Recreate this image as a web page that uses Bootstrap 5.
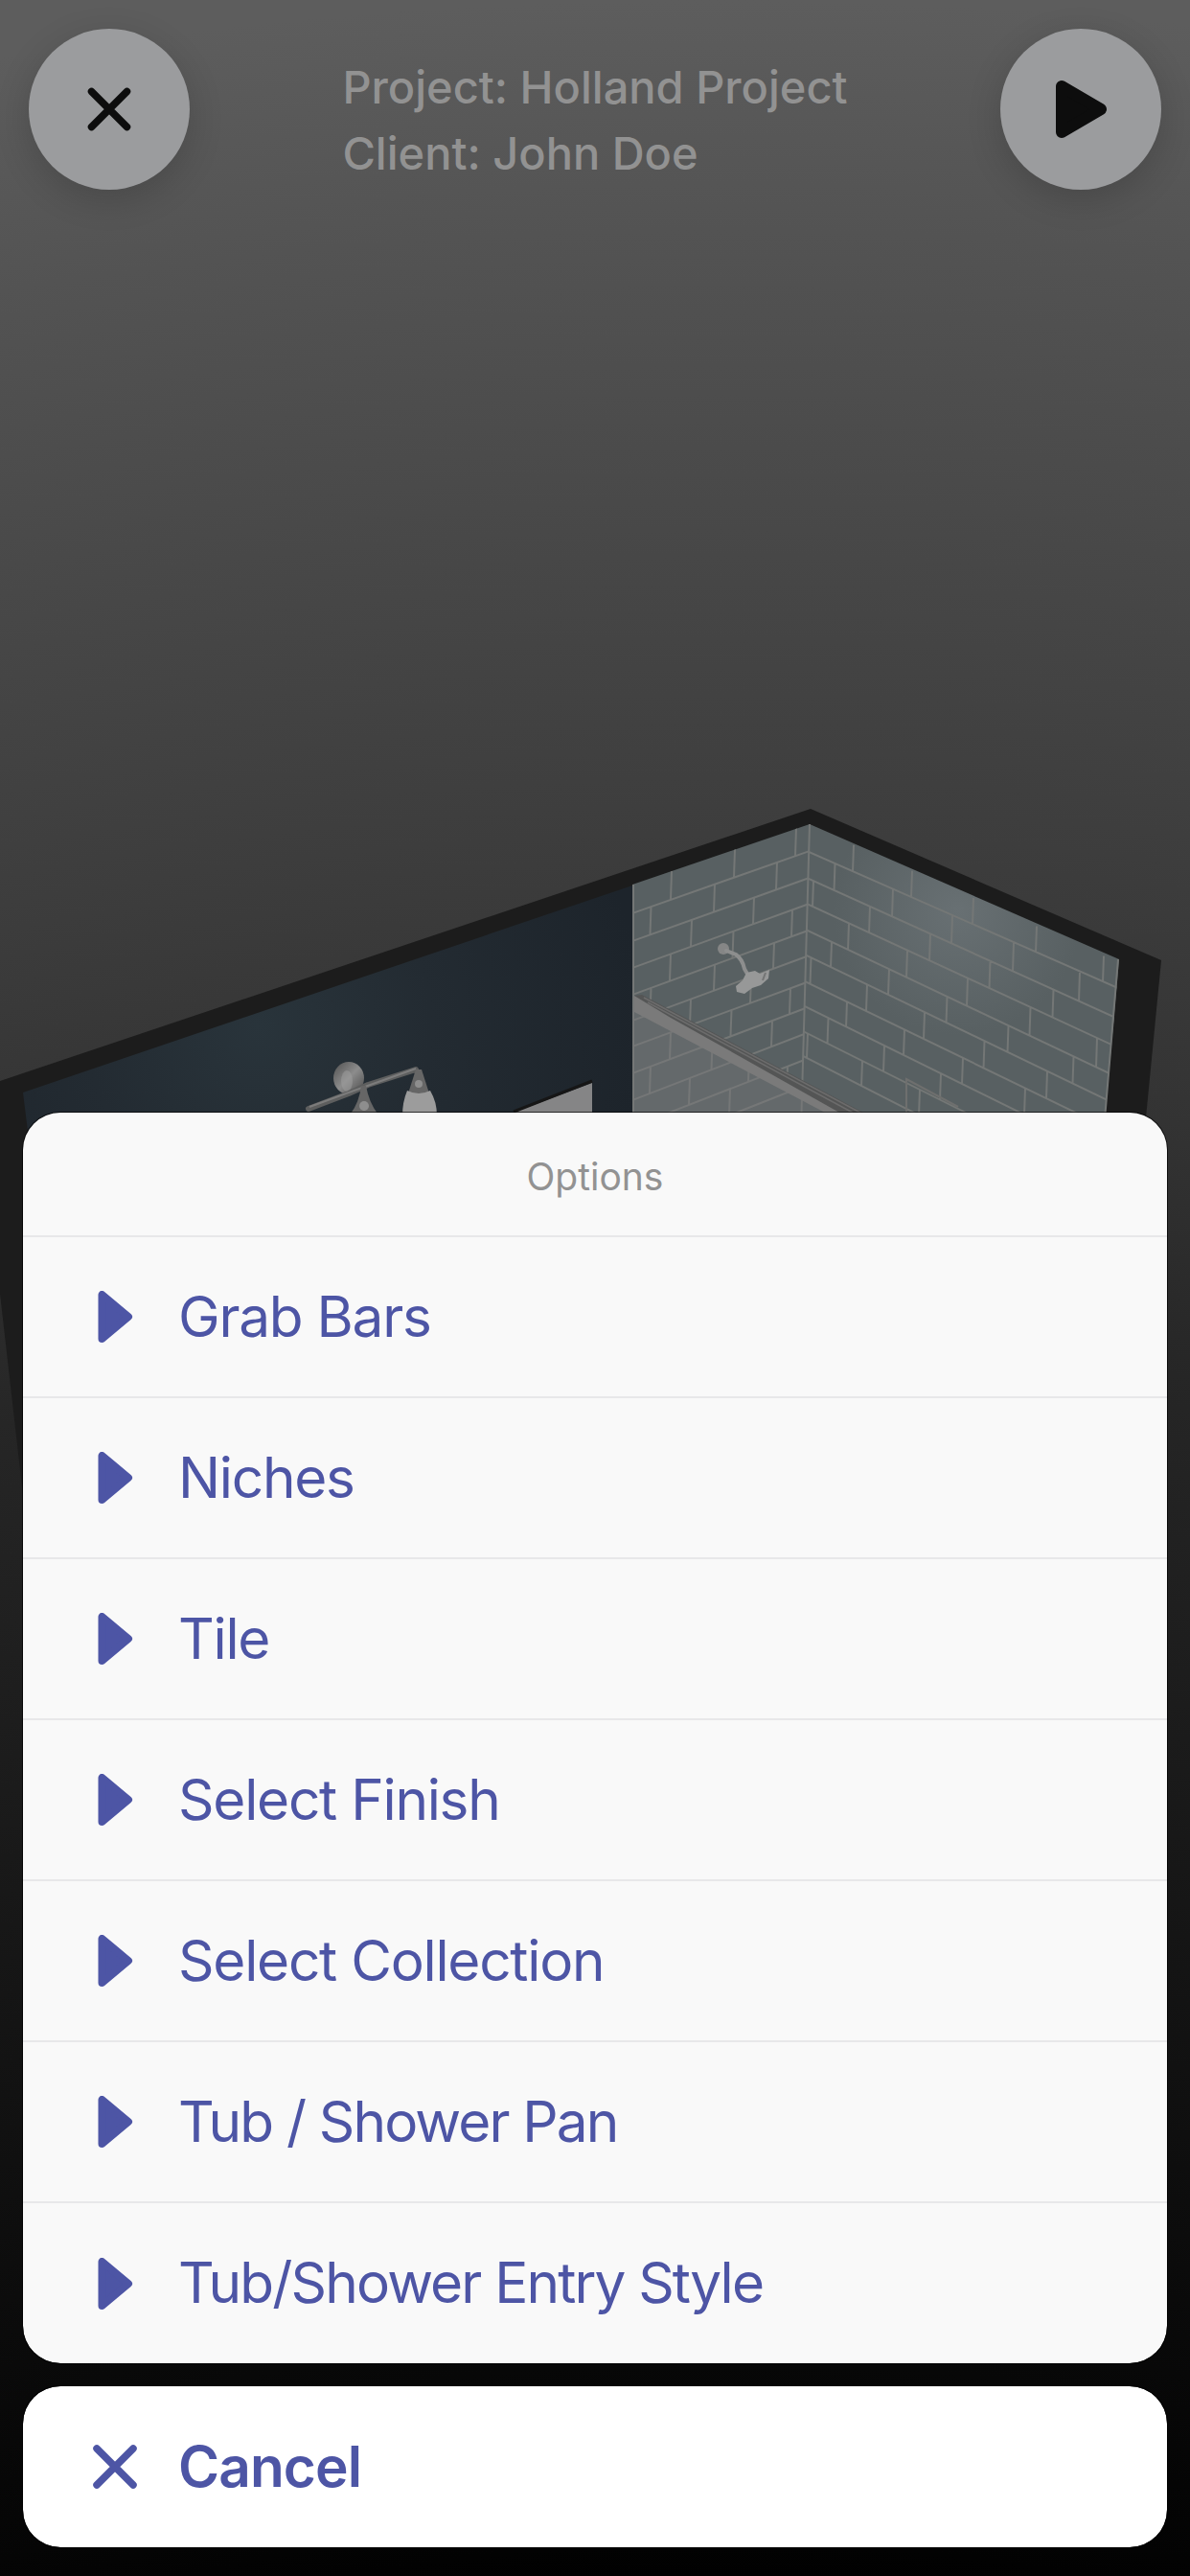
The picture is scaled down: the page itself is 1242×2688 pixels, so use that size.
<!DOCTYPE html>
<html lang="en">
<head>
  <meta charset="UTF-8">
  <title>Holland Project</title>
  <meta name="viewport" content="width=device-width, initial-scale=1">
  <link href="https://cdn.jsdelivr.net/npm/bootstrap@5.3.0/dist/css/bootstrap.min.css" rel="stylesheet">
  <style>
    body {
      font-family: Inter, "Liberation Sans", sans-serif;
      background: #000;
    }
    .viewer {
      width: 1242px;
      height: 2688px;
      padding: 30px 30px 0;
      background: radial-gradient(circle at 750px 4700px, #010101 2010px, #0a0a0a 2350px, #262626 3300px, #333 3560px, #3d3d3d 3830px, #474747 4120px, #535353 4460px, #5d5d5d 4700px);
    }
    .scene { z-index: 0; }
    .viewer-bar, .sheet { z-index: 1; }
    .round-btn {
      width: 168px;
      height: 168px;
      background: #9b9c9e;
      color: #0d0d0d;
      box-shadow: 0 10px 36px rgba(0, 0, 0, .16);
    }
    .project-info {
      margin-top: 26px;
      font-size: 47px;
      line-height: 69px;
      font-weight: 500;
      color: #929292;
    }
    .sheet {
      margin: 0 -6px 30px;
      gap: 24px;
    }
    .sheet .list-group {
      --bs-list-group-border-radius: 39px;
      --bs-list-group-border-width: 0;
      box-shadow: 0 0 0 1px rgba(0, 0, 0, .7);
    }
    .sheet-title {
      height: 128px;
      padding-top: 6px;
      font-size: 39px;
      color: #929292;
      background: #f9f9f9;
    }
    .sheet-item {
      height: 168px;
      padding: 0 0 0 72px;
      gap: 42px;
      font-size: 58.5px;
      line-height: 1;
      letter-spacing: -1.25px;
      color: #4d55a5;
      background: #f9f9f9;
    }
    .sheet-title + .sheet-item, .sheet-item + .sheet-item { border-top: 2px solid #e8e8e9 !important; }
    .sheet-item:nth-child(n+7) { letter-spacing: -1.85px; }
    #options .sheet-item:last-child { height: 169px; }
    .sheet-cancel { background: #fff; font-weight: 600; letter-spacing: -.9px; }
  </style>
</head>
<body>

  <div class="viewer position-relative overflow-hidden d-flex flex-column justify-content-between">

    <!-- 3D room -->
    <svg class="scene position-absolute top-0 start-0" width="1242" height="2688" viewBox="0 0 1242 2688">
      <defs>
        <radialGradient id="paint" gradientUnits="userSpaceOnUse" cx="270" cy="1070" r="400">
          <stop offset="0" stop-color="#29343b"/>
          <stop offset=".45" stop-color="#232b32"/>
          <stop offset="1" stop-color="#1d242b"/>
        </radialGradient>
        <radialGradient id="shine" gradientUnits="userSpaceOnUse" cx="1000" cy="950" r="130">
          <stop offset="0" stop-color="#687073"/>
          <stop offset="1" stop-color="#586062"/>
        </radialGradient>
        <linearGradient id="chrome" x1="0" x2="1" y1="0" y2="1">
          <stop offset="0" stop-color="#4f4f4f"/>
          <stop offset=".5" stop-color="#8c8c8c"/>
          <stop offset="1" stop-color="#4a4a4a"/>
        </linearGradient>
        <clipPath id="leftWall"><path d="M660 923L845 860L836 1180H660z"/></clipPath>
        <clipPath id="rightWall"><path d="M845 860L1168 1001L1152 1180H836z"/></clipPath>
      </defs>

      <path fill="#1c1c1c" d="M0 1128L846 844L1212 1002L1180 1330L40 1700L0 1350z"/>
      <path fill="url(#paint)" d="M24 1140L660 924V1180H29z"/>
      <path fill="#586062" d="M660 923L845 860L836 1180H660z"/>
      <path fill="url(#shine)" d="M845 860L1168 1001L1152 1180H836z"/>
      <g id="grout" fill="none" stroke="#747776" stroke-width="2"></g>
      <path fill="none" stroke="#747776" stroke-width="2" d="M661 923V1180M845 860L836 1180M1167 1001L1152 1180"/>

      <!-- niche edge -->
      <path fill="none" stroke="#6e6f6e" stroke-width="2" d="M946 1170V1126L1000 1155"/>

      <!-- glass door and its rail -->
      <path fill="#77797b" fill-opacity=".4" d="M661 1050L866 1162H661z"/>
      <path fill="#545555" d="M662 1039L670 1038L903 1162H864L662 1053z"/>
      <path fill="#7a7a7a" d="M662 1039L700 1062L775 1104L878 1162H863L662 1056z"/>
      <path fill="none" stroke="#6c6c6c" stroke-width="1.500" d="M672 1041L898 1161M676 1046L890 1161"/>

      <!-- shower head -->
      <circle cx="755" cy="990" r="6" fill="#858686"/>
      <path fill="none" stroke="#8d8e8e" stroke-width="4" stroke-linecap="round" d="M758 992L768 996Q775 1001 777 1011L781 1018"/>
      <path fill="#979898" d="M779 1015L788 1013L793 1016L803 1012L802 1021L794 1028L785 1031L777 1037L769 1035L768 1029L775 1023z"/>
      <path stroke="#747575" stroke-width="2" d="M799 1015L796 1023"/>

      <!-- wall light -->
      <ellipse cx="364" cy="1125" rx="16" ry="17" fill="url(#chrome)"/>
      <ellipse cx="362" cy="1128" rx="6" ry="11" fill="#a0a0a0" fill-opacity=".5"/>
      <path fill="none" stroke="#5d5e5e" stroke-width="6" stroke-linecap="round" stroke-linejoin="round" d="M322 1157L364 1141L384 1132L434 1116L437 1122"/>
      <path fill="none" stroke="#7c7c7c" stroke-width="2" d="M323 1155L364 1140L434 1115"/>
      <path fill="#666" d="M434 1116h6L448 1141H426z"/>
      <path fill="#666" d="M377 1133h5Q385 1150 394 1162H366Q375 1150 377 1133z"/>
      <circle cx="437" cy="1131" r="4" fill="#8e8e8e"/>
      <circle cx="380" cy="1154" r="5" fill="#8e8e8e"/>
      <path fill="#9c9c9c" d="M425 1138Q437 1144 449 1138Q456 1150 456 1164H420Q420 1150 425 1138z"/>

      <!-- mirror -->
      <path fill="#858586" d="M538 1160L618 1130V1170H530z"/>
      <path fill="none" stroke="#161616" stroke-width="3" d="M536 1160L618 1128"/>
    </svg>

    <div class="viewer-bar position-relative d-flex justify-content-between align-items-start">
      <button class="round-btn btn border-0 rounded-circle p-0 d-flex align-items-center justify-content-center" aria-label="Close">
        <svg width="46" height="46" viewBox="0 0 46 46" fill="none" stroke="currentColor" stroke-width="7.500" stroke-linecap="round"><path d="M4.500 4.500L41.500 41.500M41.500 4.500L4.500 41.500"/></svg>
      </button>
      <div class="project-info text-nowrap">
        <div>Project: Holland Project</div>
        <div>Client: John Doe</div>
      </div>
      <button class="round-btn btn border-0 rounded-circle p-0 d-flex align-items-center justify-content-center" aria-label="Play">
        <svg width="56" height="62" viewBox="0 0 56 62" fill="currentColor" stroke="currentColor" stroke-width="12" stroke-linejoin="round"><path d="M8 7V55L49 31z"/></svg>
      </button>
    </div>

    <div class="sheet position-relative d-flex flex-column">
      <div class="list-group overflow-hidden" id="options">
        <div class="sheet-title d-flex align-items-center justify-content-center">Options</div>
      </div>
      <div class="list-group overflow-hidden">
        <button class="sheet-item sheet-cancel list-group-item d-flex align-items-center">
          <svg width="48" height="48" viewBox="0 0 48 48" fill="none" stroke="currentColor" stroke-width="7.500" stroke-linecap="round"><path d="M5 5L43 43M43 5L5 43"/></svg>
          <span>Cancel</span>
        </button>
      </div>
    </div>
  </div>

  <script src="https://cdn.jsdelivr.net/npm/bootstrap@5.3.0/dist/js/bootstrap.bundle.min.js"></script>
  <script>
    const options = ['Grab Bars', 'Niches', 'Tile', 'Select Finish', 'Select Collection', 'Tub / Shower Pan', 'Tub/Shower Entry Style'];

    document.getElementById('options').innerHTML += options.map(name => `
      <button class="sheet-item list-group-item d-flex align-items-center">
        <svg width="48" height="54" viewBox="0 0 48 54" fill="currentColor" stroke="currentColor" stroke-width="8" stroke-linejoin="round"><path d="M10.500 4V50L38 27z"/></svg>
        <span>${name}</span>
      </button>
    `).join('');

    // Tile courses: y of each grout line at the wall's two ends
    const leftWall = {
      x: [660, 842],
      rows: [[923, 860], [953, 889], [982, 917], [1010, 944], [1038, 971.5], [1065, 998], [1092, 1025], [1120, 1051.5], [1148, 1078], [1176, 1105], [1204, 1132]],
      joints: [[701, 767, 831], [679.5, 746, 811], [722, 787], [700, 765.5, 827], [679.5, 746, 808], [721, 784], [700, 763.5, 825], [679, 743.5, 806], [720, 782], [700, 762, 822]]
    };
    const rightWall = {
      x: [842, 1160],
      rows: [[860, 1001], [888, 1028], [916, 1060], [943, 1090], [970.5, 1121], [997, 1150], [1025, 1179], [1051, 1208], [1078, 1237], [1104, 1266]],
      joints: [[891, 952, 1016, 1082, 1152], [871.5, 932, 994, 1058, 1127], [849, 908, 971, 1033.5, 1099.5, 1163], [886, 947, 1010, 1075.5, 1145], [868, 928, 988.5, 1052.5, 1120.5], [846.5, 905, 965, 1027.5, 1093], [884, 944, 1005, 1070], [864.5, 923, 982], [843, 900, 960]]
    };

    function wallPath(wall) {
      const [x0, x1] = wall.x;
      const yAt = (row, x) => row[0] + (row[1] - row[0]) * (x - x0) / (x1 - x0);
      let d = '';
      wall.rows.forEach((row, i) => {
        if (i > 0) d += `M${x0 - 10} ${yAt(row, x0 - 10)}L${x1 + 10} ${yAt(row, x1 + 10)}`;
        (wall.joints[i] || []).forEach(x => {
          d += `M${x} ${yAt(row, x)}L${x - 1} ${yAt(wall.rows[i + 1], x)}`;
        });
      });
      return d;
    }

    document.getElementById('grout').innerHTML = `
      <path clip-path="url(#leftWall)" d="${wallPath(leftWall)}"/>
      <path clip-path="url(#rightWall)" d="${wallPath(rightWall)}"/>
    `;
  </script>
</body>
</html>
